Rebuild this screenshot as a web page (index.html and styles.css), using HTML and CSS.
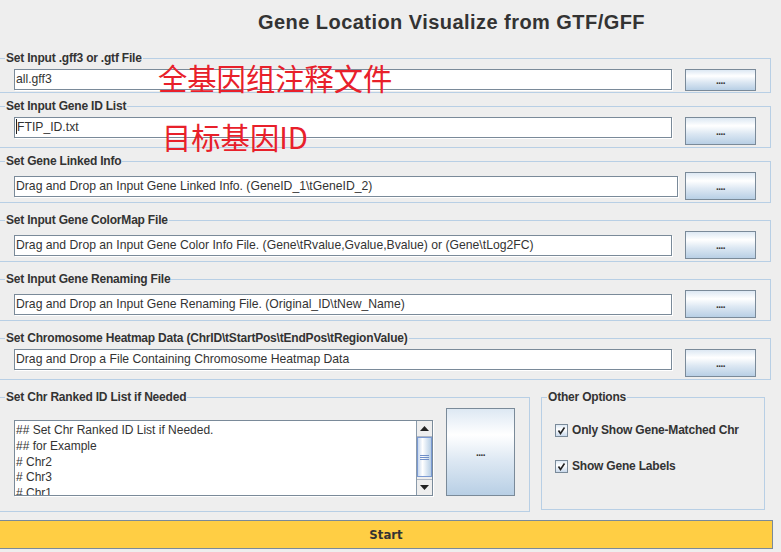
FILE: index.html
```html
<!DOCTYPE html>
<html lang="en">
<head>
<meta charset="utf-8">
<title>Gene Location Visualize from GTF/GFF</title>
<link rel="stylesheet" href="styles.css">
</head>
<body>
<div class="app">
  <h1 class="title">Gene Location Visualize from GTF/GFF</h1>

  <fieldset class="sec sec-first">
    <legend>Set Input .gff3 or .gtf File</legend>
    <div class="row row-top">
      <div class="field">all.gff3</div>
      <button class="btn btn-short">....</button>
    </div>
  </fieldset>

  <fieldset class="sec sec-tight">
    <legend>Set Input Gene ID List</legend>
    <div class="row row-top">
      <div class="field"><span class="caret"></span>FTIP_ID.txt</div>
      <button class="btn">....</button>
    </div>
  </fieldset>

  <fieldset class="sec sec-tight">
    <legend>Set Gene Linked Info</legend>
    <div class="row row-mid row-wide">
      <div class="field">Drag and Drop an Input Gene Linked Info. (GeneID_1\tGeneID_2)</div>
      <button class="btn">....</button>
    </div>
  </fieldset>

  <fieldset class="sec">
    <legend>Set Input Gene ColorMap File</legend>
    <div class="row row-mid">
      <div class="field">Drag and Drop an Input Gene Color Info File. (Gene\tRvalue,Gvalue,Bvalue) or (Gene\tLog2FC)</div>
      <button class="btn">....</button>
    </div>
  </fieldset>

  <fieldset class="sec">
    <legend>Set Input Gene Renaming File</legend>
    <div class="row row-mid">
      <div class="field">Drag and Drop an Input Gene Renaming File. (Original_ID\tNew_Name)</div>
      <button class="btn">....</button>
    </div>
  </fieldset>

  <fieldset class="sec">
    <legend>Set Chromosome Heatmap Data (ChrID\tStartPos\tEndPos\tRegionValue)</legend>
    <div class="row row-top">
      <div class="field">Drag and Drop a File Containing Chromosome Heatmap Data</div>
      <button class="btn">....</button>
    </div>
  </fieldset>

  <div class="bottom">
    <fieldset class="panel panel-list">
      <legend>Set Chr Ranked ID List if Needed</legend>
      <div class="list-row">
        <div class="ta">
          <div class="ta-text">## Set Chr Ranked ID List if Needed.
## for Example
# Chr2
# Chr3
# Chr1</div>
          <div class="sb">
            <div class="sb-btn"><svg width="9" height="5" viewBox="0 0 9 5"><path d="M0 5 L4.5 0 L9 5 Z" fill="#222"/></svg></div>
            <div class="sb-thumb"><span class="grip"></span><span class="grip"></span><span class="grip"></span></div>
            <div class="sb-track"></div>
            <div class="sb-btn sb-down"><svg width="9" height="5" viewBox="0 0 9 5"><path d="M0 0 L9 0 L4.5 5 Z" fill="#222"/></svg></div>
          </div>
        </div>
        <button class="btn btn-big">....</button>
      </div>
    </fieldset>

    <fieldset class="panel panel-opts">
      <legend>Other Options</legend>
      <label class="opt"><span class="cb"><svg width="13" height="13" viewBox="0 0 13 13"><path d="M3.5 6.5 L5.5 9.5 L9.5 3.5" fill="none" stroke="#222" stroke-width="1.6"/></svg></span>Only Show Gene-Matched Chr</label>
      <label class="opt"><span class="cb"><svg width="13" height="13" viewBox="0 0 13 13"><path d="M3.5 6.5 L5.5 9.5 L9.5 3.5" fill="none" stroke="#222" stroke-width="1.6"/></svg></span>Show Gene Labels</label>
    </fieldset>
  </div>

  <button class="start">Start</button>

  <div class="note note-1">全基因组注释文件</div>
  <div class="note note-2">目标基因ID</div>
</div>
</body>
</html>
```

FILE: styles.css
```css
html, body {
  margin: 0;
  padding: 0;
  background: #eeeeee;
}
body {
  width: 781px;
  height: 552px;
  overflow: hidden;
  font-family: "Liberation Sans", Arial, sans-serif;
  color: #333333;
}
.app {
  position: relative;
  display: flex;
  flex-direction: column;
  align-items: flex-start;
}
.title {
  margin: 0;
  padding: 11px 0 0 258px;
  font: bold 20px/22px "Liberation Sans", Arial, sans-serif;
  letter-spacing: 0.45px;
  color: #333333;
}

/* titled sections */
.sec, .panel {
  box-sizing: border-box;
  margin: 0;
  border: 1px solid #b8cfe5;
  min-width: 0;
}
.sec {
  width: 772px;
  margin-left: -1px;
  margin-top: 10px;
  padding: 4px 14px 2px 5px;
}
.sec-first {
  margin-top: 18px;
  padding-bottom: 1px;
}
.sec-tight {
  margin-top: 6px;
}
legend {
  padding: 0 1px;
  font: bold 12px/14px "Liberation Sans", Arial, sans-serif;
  letter-spacing: -0.2px;
  color: #333333;
}
.row {
  display: flex;
  margin-left: 9px;
  gap: 13px;
}
.row-top { align-items: flex-start; }
.row-mid { align-items: center; }
.row-wide { gap: 7px; }

.field {
  flex: 1;
  box-sizing: border-box;
  height: 21px;
  padding: 0 1px;
  border: 1px solid #7a8a99;
  box-shadow: 1px 1px 0 #ffffff;
  background: #ffffff;
  font: 12.2px/19px "Liberation Sans", Arial, sans-serif;
  color: #333333;
  white-space: nowrap;
  overflow: hidden;
}
.caret {
  display: inline-block;
  width: 1px;
  height: 15px;
  vertical-align: -3px;
  background: #222222;
}
.btn {
  box-sizing: border-box;
  width: 71px;
  height: 28px;
  padding: 0;
  border: 1px solid #7a8a99;
  background: linear-gradient(#dde8f3 0%, #ffffff 30%, #dde8f3 60%, #b8cfe5 100%);
  font: bold 10px "Liberation Sans", Arial, sans-serif;
  color: #333333;
  letter-spacing: -0.5px;
}
.btn-short {
  height: 22px;
}

/* bottom area */
.bottom {
  display: flex;
  align-items: flex-start;
  margin-top: 10px;
}
.panel-list {
  width: 531px;
  margin-left: -1px;
  padding: 4px 14px 15px 5px;
}
.list-row {
  display: flex;
  align-items: flex-end;
  gap: 13px;
  margin-left: 9px;
}
.ta {
  box-sizing: border-box;
  width: 419px;
  height: 76px;
  display: flex;
  border: 1px solid #7a8a99;
  box-shadow: 1px 1px 0 #ffffff;
  background: #ffffff;
}
.ta-text {
  flex: 1;
  padding: 2px 0 0 1px;
  overflow: hidden;
  white-space: pre;
  font: 12px/15.8px "Liberation Sans", Arial, sans-serif;
  color: #333333;
}
.sb {
  width: 15px;
  display: flex;
  flex-direction: column;
  border-left: 1px solid #8a9aaa;
  background: #eeeeee;
}
.sb-btn {
  box-sizing: border-box;
  height: 16px;
  display: flex;
  align-items: center;
  justify-content: center;
  border-bottom: 1px solid #b0b8c4;
  background: #eeeeee;
}
.sb-down {
  border-bottom: 0;
  border-top: 1px solid #b0b8c4;
}
.sb-thumb {
  box-sizing: border-box;
  height: 40px;
  display: flex;
  flex-direction: column;
  align-items: center;
  justify-content: center;
  gap: 1px;
  border: 1px solid #7b9ad3;
  background: linear-gradient(to right, #c9d9ee 0%, #ffffff 35%, #dde8f3 65%, #b8cfe5 100%);
}
.grip {
  width: 9px;
  height: 1px;
  background: #6f8fc9;
}
.sb-track {
  flex: 1;
}
.btn-big {
  width: 69px;
  height: 88px;
}
.panel-opts {
  width: 224px;
  height: 120px;
  margin-left: 11px;
  padding: 16px 6px 0 5px;
  display: flex;
  flex-direction: column;
  gap: 16px;
}
.opt {
  display: flex;
  align-items: center;
  gap: 4px;
  height: 20px;
  margin-left: 8px;
  font: bold 12px "Liberation Sans", Arial, sans-serif;
  letter-spacing: -0.2px;
  color: #333333;
}
.cb {
  box-sizing: border-box;
  width: 13px;
  height: 13px;
  display: flex;
  border: 1px solid #7a8a99;
  background: linear-gradient(#dde8f3 0%, #ffffff 40%, #c9d9ec 100%);
}
.cb svg {
  margin: -1px;
}

.start {
  box-sizing: border-box;
  width: 774px;
  height: 29px;
  margin: 8px 0 0 -1px;
  border: 1px solid #7a8a99;
  background: #ffce44;
  font: bold 13px "DejaVu Sans", sans-serif;
  font-stretch: condensed;
  color: #333333;
  padding: 0;
}

/* red annotations over the form */
.note {
  position: absolute;
  font: 29.3px/1 "Noto Sans CJK SC", "Noto Sans", sans-serif;
  color: #e8202a;
  white-space: nowrap;
}
.note-1 {
  left: 158px;
  top: 63px;
}
.note-2 {
  left: 162px;
  top: 122px;
}
```
